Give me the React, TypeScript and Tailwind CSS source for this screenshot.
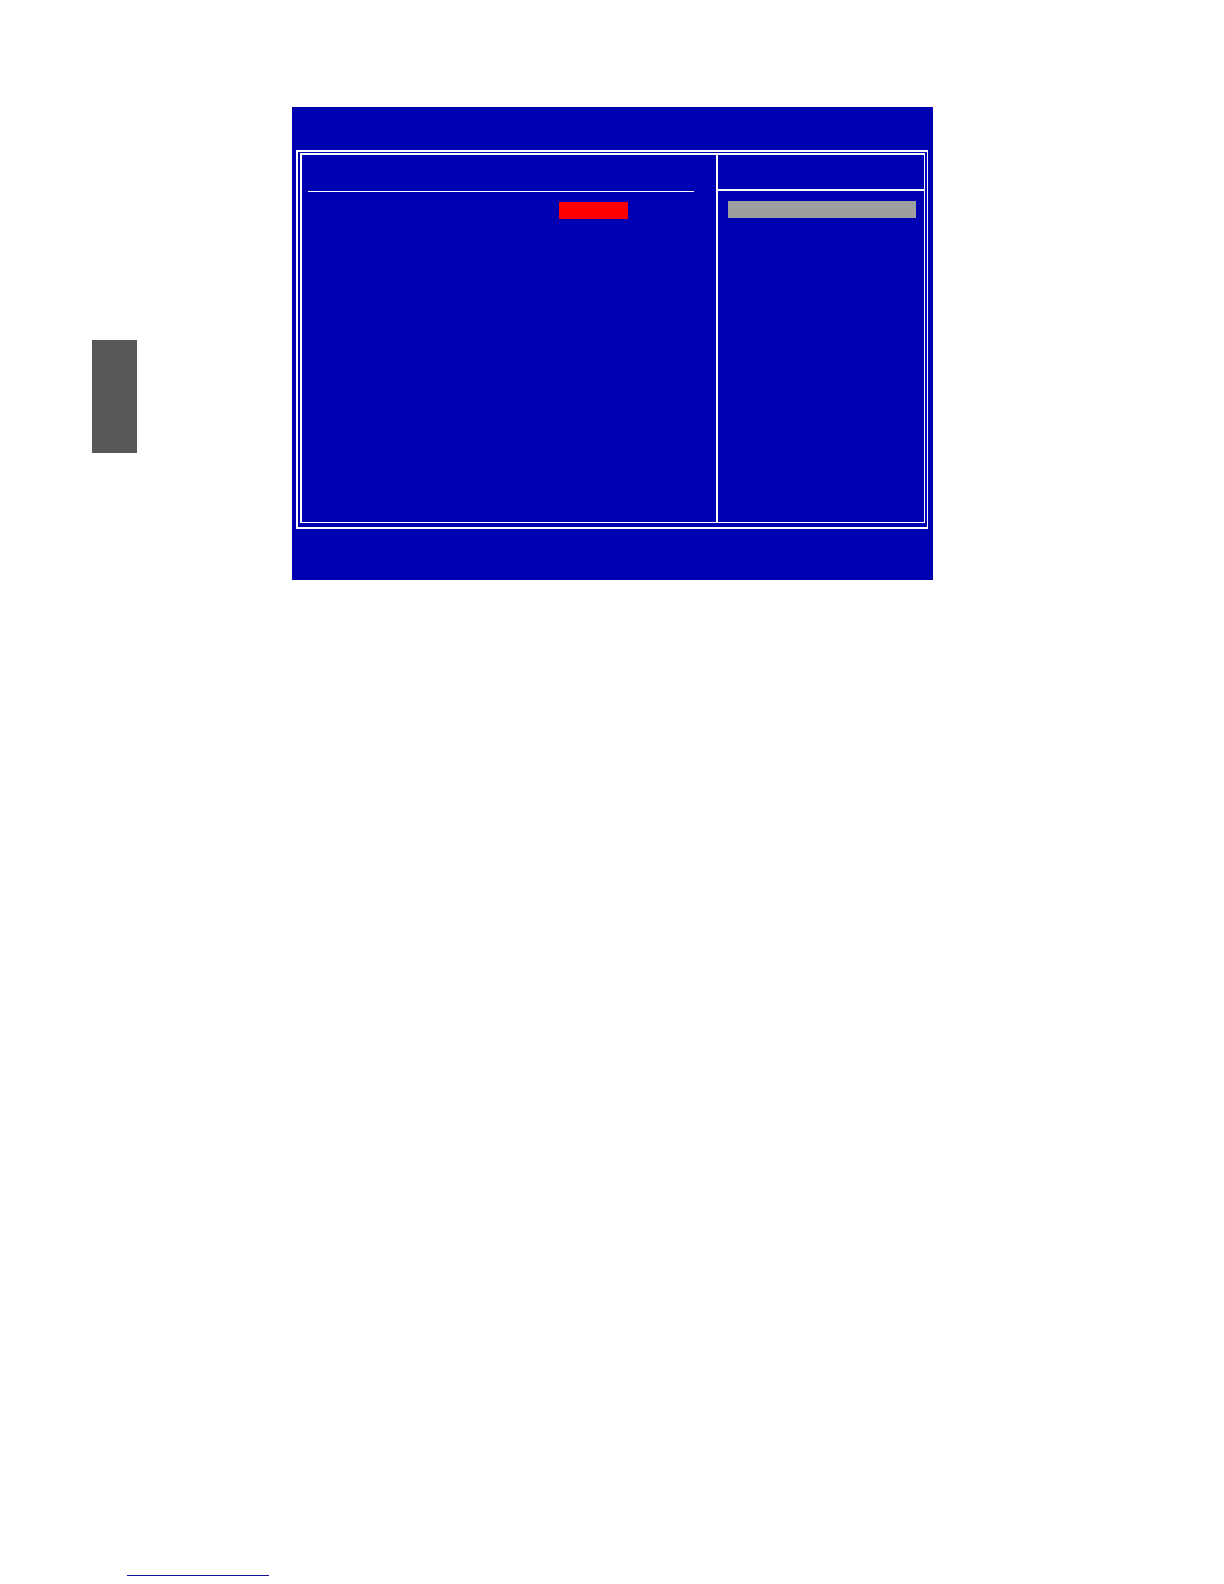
import React from 'react';

function SetupItems() {
  return (
    <section className="flex-1 border-r-2 border-white">
      <div className="ml-1.5 mr-[22px] h-[37px] border-b border-white" />
      <div className="mr-[88px] mt-2.5 flex justify-end">
        <div className="h-[17px] w-[69px] bg-[#ff0000]" />
      </div>
    </section>
  );
}

function ItemHelp() {
  return (
    <aside className="w-[206px]">
      <div className="h-9 border-b-2 border-white" />
      <div className="ml-2.5 mr-2 mt-2.5 h-[17px] bg-[#9d9f9e]" />
    </aside>
  );
}

function SetupScreen() {
  return (
    <main className="flex-1 bg-[#0000b3] pb-[51px] pl-1 pr-[5px] pt-[43px]">
      {/* double frame, thinner on the right and bottom sides */}
      <div className="border-2 border-r border-white pb-1 pl-0.5 pr-0.5 pt-px">
        <div className="flex h-[370px] border-b border-l-2 border-r border-t-2 border-white">
          <SetupItems />
          <ItemHelp />
        </div>
      </div>
    </main>
  );
}

export default function App() {
  return (
    <div className="flex min-h-screen flex-col bg-white font-['Liberation_Sans',sans-serif]">
      <div className="flex gap-[155px] pl-[92px] pr-[291px] pt-[107px]">
        <div className="mt-[233px] h-[113px] w-[45px] bg-[#58585a]" />
        <SetupScreen />
      </div>
      <footer className="mt-auto pb-2 pl-[127px]">
        <div className="h-px w-[142px] bg-[#10109a]" />
      </footer>
    </div>
  );
}
